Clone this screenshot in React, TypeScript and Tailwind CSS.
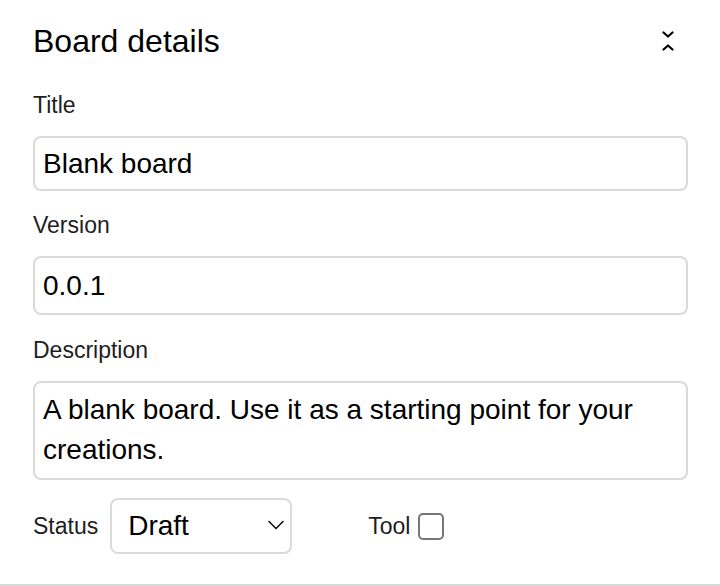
export default function App() {
  return (
    <div className="w-[720px] h-[586px] bg-white border-b-2 border-[#d9d9d9] pl-[33px] pr-[32px] font-['Liberation_Sans',Arial,sans-serif] text-black">
      <div className="flex items-center justify-between pt-[21px]">
        <h2 className="text-[32px] leading-[40px] font-normal">Board details</h2>
        <button className="mr-[14px] text-black" aria-label="Collapse">
          <svg width="12" height="20" viewBox="0 0 12 20" fill="none" stroke="currentColor" strokeWidth="2.2" strokeLinecap="round" strokeLinejoin="round">
            <path d="M1.5 1.5 6 5.5 10.5 1.5" />
            <path d="M1.5 18.5 6 14.5 10.5 18.5" />
          </svg>
        </button>
      </div>

      <label className="block mt-[30px] mb-[17px] text-[23px] leading-[28px] text-[#1e1e1e]">Title</label>
      <input
        defaultValue="Blank board"
        className="block w-full h-[55px] px-[8px] border-2 border-[#dadada] rounded-[8px] text-[28px] outline-none"
      />

      <label className="block mt-[20px] mb-[17px] text-[23px] leading-[28px] text-[#1e1e1e]">Version</label>
      <input
        defaultValue="0.0.1"
        className="block w-full h-[59px] px-[8px] border-2 border-[#dadada] rounded-[8px] text-[28px] outline-none"
      />

      <label className="block mt-[21px] mb-[17px] text-[23px] leading-[28px] text-[#1e1e1e]">Description</label>
      <textarea
        rows={2}
        defaultValue="A blank board. Use it as a starting point for your creations."
        className="block w-full h-[99px] px-[8px] pt-[7px] border-2 border-[#dadada] rounded-[8px] text-[28px] leading-[40px] resize-none outline-none"
      />

      <div className="flex items-center mt-[18px]">
        <span className="text-[23px] leading-[28px] text-[#1e1e1e]">Status</span>
        <div className="relative ml-[12px]">
          <select
            defaultValue="draft"
            className="appearance-none block w-[182px] h-[56px] pl-[16px] border-2 border-[#dadada] rounded-[8px] bg-white text-[28px] outline-none"
          >
            <option value="draft">Draft</option>
            <option value="published">Published</option>
          </select>
          <svg className="absolute right-[8px] top-[22px] pointer-events-none" width="16" height="10" viewBox="0 0 16 10" fill="none" stroke="#111" strokeWidth="1.6" strokeLinecap="round" strokeLinejoin="round">
            <path d="M1 1.5 8 8.5 15 1.5" />
          </svg>
        </div>
        <span className="ml-[76px] text-[23px] leading-[28px] text-[#1e1e1e]">Tool</span>
        <input
          type="checkbox"
          className="appearance-none ml-[8px] w-[26px] h-[27px] border-2 border-[#767676] rounded-[5px] bg-white"
        />
      </div>
    </div>
  );
}
